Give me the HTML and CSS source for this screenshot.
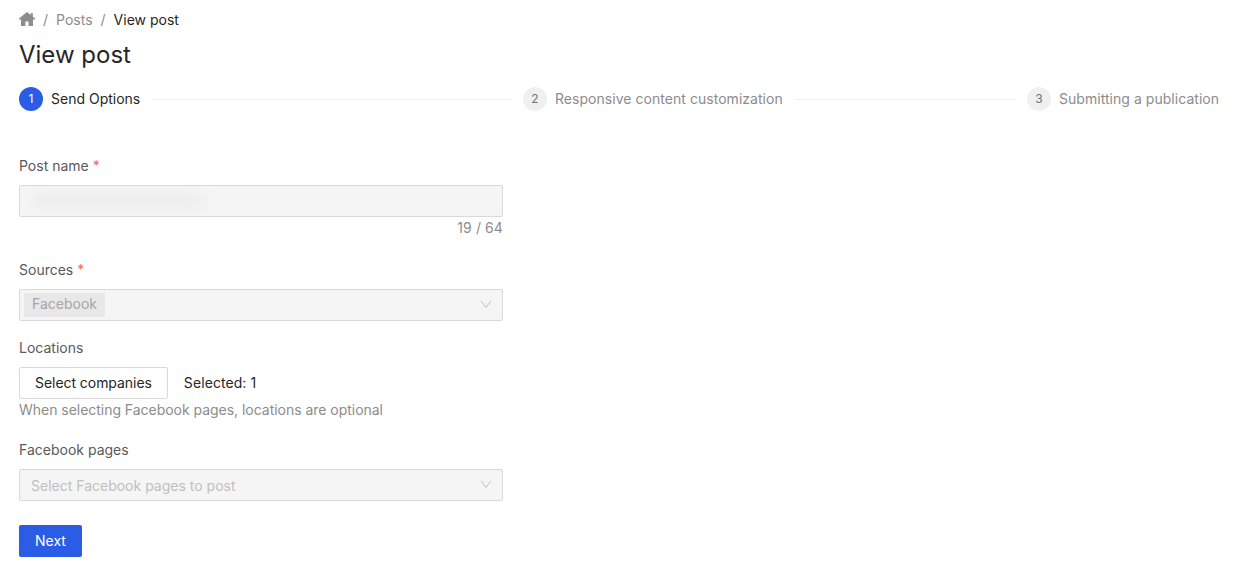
FILE: index.html
```html
<!DOCTYPE html>
<html lang="en">
<head>
<meta charset="utf-8">
<title>View post</title>
<link rel="stylesheet" href="styles.css">
</head>
<body>
<main class="page">
  <nav class="crumbs">
    <svg class="home" viewBox="0 0 16 14" width="16" height="14"><path d="M8 0 L11.8 3.1 V1 H13.8 V4.8 L16 6.6 V7.6 H14 V14 H9.6 V9.4 H6.4 V14 H2 V7.6 H0 V6.6 Z" fill="#8c8c8c"/></svg>
    <span class="sep">/</span>
    <span class="crumb-link">Posts</span>
    <span class="sep">/</span>
    <span class="crumb-current">View post</span>
  </nav>
  <h1 class="title">View post</h1>
  <ol class="steps">
    <li class="step step-active"><span class="dot">1</span><span class="step-label">Send Options</span><span class="line"></span></li>
    <li class="step"><span class="dot">2</span><span class="step-label">Responsive content customization</span><span class="line"></span></li>
    <li class="step step-last"><span class="dot">3</span><span class="step-label">Submitting a publication</span></li>
  </ol>
  <form class="form">
    <div class="field f-name">
      <div class="label">Post name <span class="req">*</span></div>
      <div class="control"><span class="blurred"></span></div>
      <div class="count">19 / 64</div>
    </div>
    <div class="field f-sources">
      <div class="label">Sources <span class="req">*</span></div>
      <div class="control select"><span class="tag">Facebook</span>
        <svg class="chev" viewBox="0 0 12 8" width="12" height="8"><path d="M1 1 L6 7.4 L11 1" fill="none" stroke="#bfbfbf" stroke-width="1"/></svg>
      </div>
    </div>
    <div class="field f-locations">
      <div class="label">Locations</div>
      <div class="loc-row"><button type="button" class="btn">Select companies</button><span class="selected">Selected: 1</span></div>
      <div class="help">When selecting Facebook pages, locations are optional</div>
    </div>
    <div class="field f-pages">
      <div class="label">Facebook pages</div>
      <div class="control select"><span class="placeholder">Select Facebook pages to post</span>
        <svg class="chev" viewBox="0 0 12 8" width="12" height="8"><path d="M1 1 L6 7.4 L11 1" fill="none" stroke="#bfbfbf" stroke-width="1"/></svg>
      </div>
    </div>
    <button type="button" class="btn-primary">Next</button>
  </form>
</main>
</body>
</html>
```

FILE: styles.css
```css
* { box-sizing: border-box; }
html, body { margin: 0; padding: 0; background: #fff; }
body { font-family: Inter, "Liberation Sans", sans-serif; font-size: 14px; line-height: 22px; color: #262626; }
.page { padding: 9px 19px 0; }
.crumbs { display: flex; align-items: center; height: 22px; }
.home { display: block; margin-top: -2px; }
.sep { color: #8c8c8c; margin: 0 8px; }
.crumb-link { color: #8c8c8c; }
.crumb-current { color: #262626; }
.title { margin: 6px 0 0; font-size: 24px; line-height: 36px; font-weight: 400; color: #262626; }
.steps { list-style: none; margin: 14px 0 0; padding: 0; display: flex; align-items: center; height: 24px; }
.step { flex: 1 1 0; display: flex; align-items: center; min-width: 0; color: #8c8c8c; }
.step-last { flex: 0 0 192px; }
.step-active { color: #262626; }
.dot { width: 24px; height: 24px; border-radius: 50%; background: #f0f0f0; color: #737373; display: flex; align-items: center; justify-content: center; font-size: 12px; flex: none; }
.step-active .dot { background: #2b5ce6; color: #fff; }
.step-label { margin-left: 8px; white-space: nowrap; letter-spacing: 0.04px; }
.step-active .step-label { letter-spacing: 0; }
.line { flex: 1; height: 1px; background: #f0f0f0; margin: 0 12px; }
.form { width: 484px; margin-top: 44px; }
.label { color: #595959; height: 22px; margin-bottom: 8px; }
.req { color: #ea6f5a; margin-left: 0; }
.control { position: relative; height: 32px; background: #f5f5f5; border: 1px solid #d9d9d9; border-radius: 2px; display: flex; align-items: center; overflow: hidden; }
.blurred { position: absolute; left: 12px; top: 8px; width: 170px; height: 14px; background: #ececec; filter: blur(7px); }
.count { text-align: right; color: #8c8c8c; letter-spacing: 0.1px; }
.f-name { margin-bottom: 20px; }
.f-sources { margin-bottom: 16px; }
.f-locations { margin-bottom: 18px; }
.f-pages { margin-bottom: 24px; }
.select { padding: 0 11px; }
.f-sources .select { padding-left: 4px; }
.tag { background: #e8e8e8; color: #a6a6a6; height: 24px; line-height: 22px; padding: 0 8px; border-radius: 2px; }
.placeholder { color: #bfbfbf; margin-top: 2px; }
.chev { position: absolute; right: 10px; top: 10px; }
.loc-row { display: flex; align-items: center; }
.btn { height: 32px; padding: 0 15px; background: #fff; border: 1px solid #d9d9d9; border-radius: 2px; font: inherit; color: #262626; letter-spacing: -0.05px; }
.selected { margin-left: 16px; color: #262626; letter-spacing: 0.08px; }
.help { color: #8c8c8c; letter-spacing: -0.03px; }
.btn-primary { display: block; height: 32px; padding: 0 16px; background: #2b5ce6; border: 0; border-radius: 2px; font: inherit; color: #fff; }
```
